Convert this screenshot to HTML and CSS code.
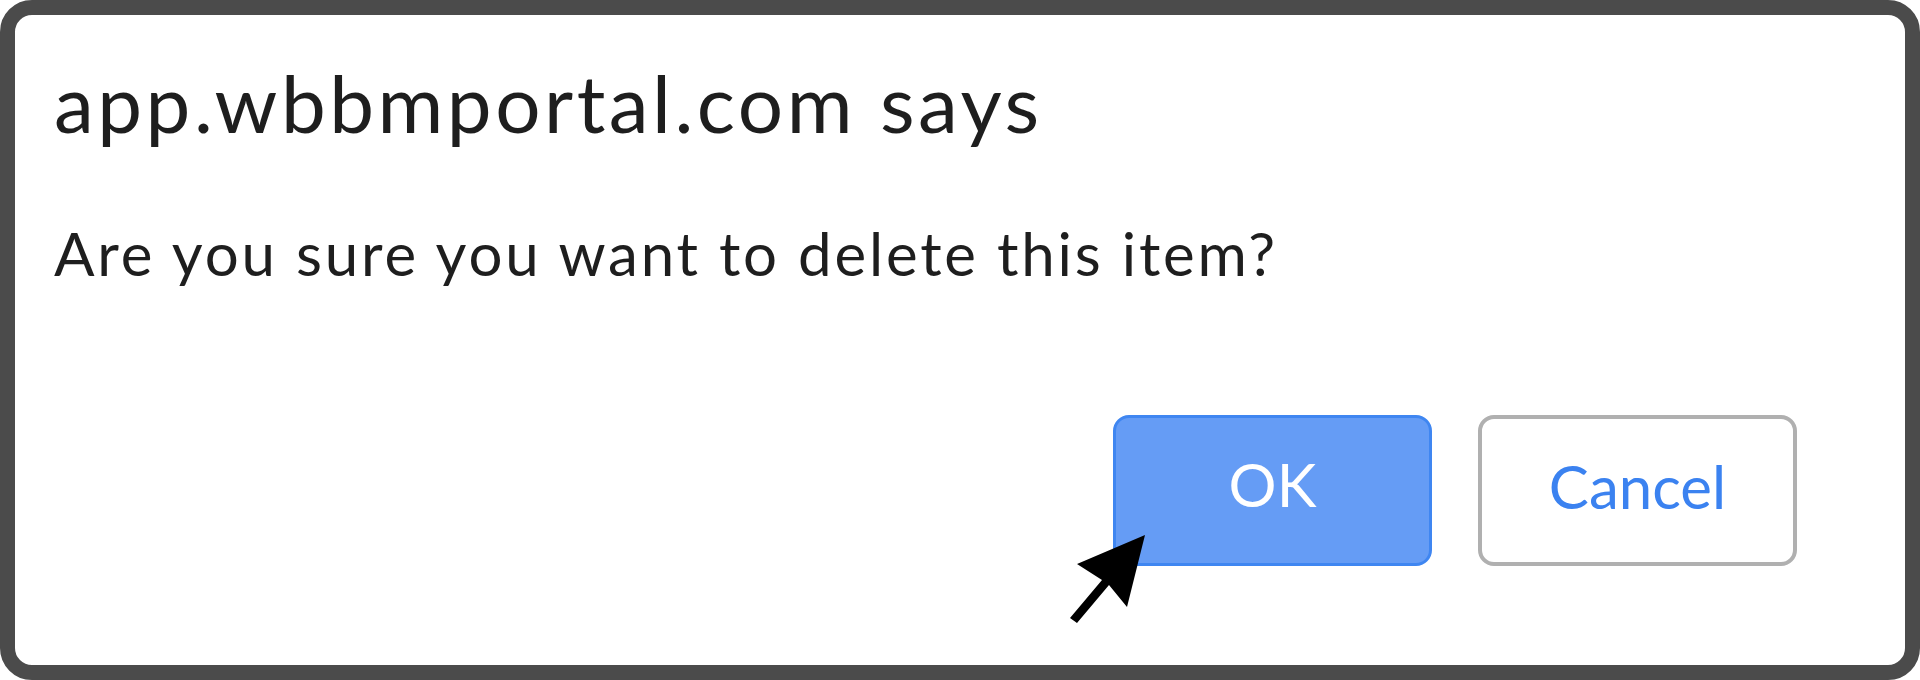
FILE: index.html
```html
<!DOCTYPE html>
<html lang="en">
	<head>
		<meta charset="UTF-8" />
		<meta name="viewport" content="width=device-width, initial-scale=1.0" />
		<title>Confirm</title>
		<link rel="stylesheet" href="styles.css">
	</head>
	<body>
		<div class="dialog">
			<h1 class="title">app.wbbmportal.com says</h1>
			<p class="message">Are you sure you want to delete this item?</p>
			<div class="actions">
				<button class="btn btn-ok">OK</button>
				<button class="btn btn-cancel">Cancel</button>
			</div>

			<svg class="cursor" width="100" height="100" viewBox="0 0 100 100">
				<polygon points="85,5 67,77 49,55 17,93 10,88 42,50 17,34" fill="#000" />
			</svg>
		</div>
	</body>
</html>
```

FILE: styles.css
```css
* {
	padding: 0;
	margin: 0;
	box-sizing: border-box;
}
body {
	background: #fff;
	font-family: Lato, "Open Sans", sans-serif;
	color: #1e1e1e;
}
.dialog {
	position: relative;
	width: 1920px;
	height: 680px;
	border: 15px solid #4b4b4b;
	border-radius: 32px;
	background: #fff;
	padding: 47px 108px 0 39px;
	display: flex;
	flex-direction: column;
}
.title {
	font-size: 80px;
	font-weight: 400;
	line-height: 80px;
	letter-spacing: 3.5px;
}
.message {
	margin-top: 81px;
	font-size: 60px;
	line-height: 60px;
	letter-spacing: 2.8px;
}
.actions {
	margin-top: 132px;
	display: flex;
	justify-content: flex-end;
	gap: 46px;
}
.btn {
	width: 319px;
	height: 151px;
	border-radius: 16px;
	font-family: Lato, "Open Sans", sans-serif;
	font-size: 60px;
	line-height: 60px;
	padding-bottom: 14px;
	cursor: pointer;
}
.btn-ok {
	background: #659cf5;
	border: 3px solid #3f86f1;
	color: #fff;
}
.btn-cancel {
	background: #fff;
	border: 4px solid #b0b0b0;
	color: #3b82f0;
	padding-bottom: 10px;
}
.cursor {
	position: absolute;
	left: 1045px;
	top: 515px;
}
```
